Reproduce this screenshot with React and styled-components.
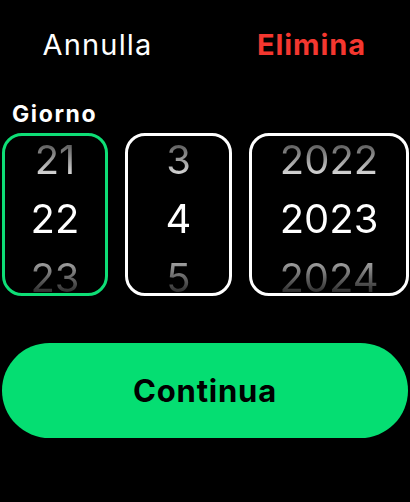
import React from 'react';
import styled, { createGlobalStyle } from 'styled-components';

const Global = createGlobalStyle`
  html, body {
    margin: 0;
    padding: 0;
    background: #000;
  }
  body {
    font-family: Inter, "Noto Sans", sans-serif;
    color: #fff;
  }
`;

const Screen = styled.div`
  width: 410px;
  height: 502px;
  background: #000;
  display: flex;
  flex-direction: column;
  overflow: hidden;
`;

const TopBar = styled.div`
  display: grid;
  grid-template-columns: 1fr 1fr;
  padding-top: 24px;
  height: 42px;
  align-items: center;
`;

const TopAction = styled.div`
  text-align: center;
  font-size: 29px;
  line-height: 34px;
  font-weight: ${(p) => (p.$danger ? 700 : 400)};
  color: ${(p) => (p.$danger ? '#f4372f' : '#fff')};
  padding: ${(p) => (p.$danger ? '0 0 0 8px' : '0 10px 0 0')};
  letter-spacing: ${(p) => (p.$danger ? '0.9px' : '1.2px')};
`;

const Label = styled.div`
  height: 67px;
  display: flex;
  align-items: flex-end;
  padding: 0 0 7px 12px;
  box-sizing: border-box;
  font-size: 23px;
  line-height: 24px;
  font-weight: 700;
  letter-spacing: 1.6px;
`;

const Pickers = styled.div`
  display: grid;
  grid-template-columns: 106px 107px 1fr;
  gap: 17px;
  padding: 0 1px 0 2px;
`;

const Wheel = styled.div`
  height: 163px;
  box-sizing: border-box;
  border: 3px solid ${(p) => (p.$active ? '#0ede76' : '#fff')};
  border-radius: 20px;
  display: flex;
  flex-direction: column;
  align-items: center;
  justify-content: center;
  overflow: hidden;
`;

const Value = styled.div`
  height: 59px;
  line-height: 59px;
  font-size: 40px;
  font-weight: 400;
  text-align: center;
  flex-shrink: 0;
  margin-top: ${(p) => (p.$pos === 'prev' ? '8px' : '0')};
  ${(p) =>
    p.$pos === 'prev'
      ? `background: linear-gradient(to bottom, #5e5e5e 25%, #d6d6d6 75%);`
      : p.$pos === 'next'
      ? `background: linear-gradient(to bottom, #a0a0a0 25%, #222 80%);`
      : `background: #fff;`}
  -webkit-background-clip: text;
  background-clip: text;
  color: transparent;
`;

const Footer = styled.div`
  padding: 47px 2px 0 2px;
`;

const Continue = styled.button`
  width: 100%;
  height: 95px;
  border: none;
  border-radius: 48px;
  background: #05de72;
  color: #000;
  font-family: Inter, "Noto Sans", sans-serif;
  font-size: 31px;
  font-weight: 700;
  letter-spacing: 0.8px;
  cursor: pointer;
`;

const columns = [
  { values: ['21', '22', '23'], active: true },
  { values: ['3', '4', '5'] },
  { values: ['2022', '2023', '2024'] },
];

const App = () => {
  return (
    <>
      <Global />
      <Screen>
        <TopBar>
          <TopAction>Annulla</TopAction>
          <TopAction $danger>Elimina</TopAction>
        </TopBar>
        <Label>Giorno</Label>
        <Pickers>
          {columns.map((col, i) => (
            <Wheel key={i} $active={col.active}>
              <Value $pos="prev">{col.values[0]}</Value>
              <Value>{col.values[1]}</Value>
              <Value $pos="next">{col.values[2]}</Value>
            </Wheel>
          ))}
        </Pickers>
        <Footer>
          <Continue>Continua</Continue>
        </Footer>
      </Screen>
    </>
  );
};

export default App;
